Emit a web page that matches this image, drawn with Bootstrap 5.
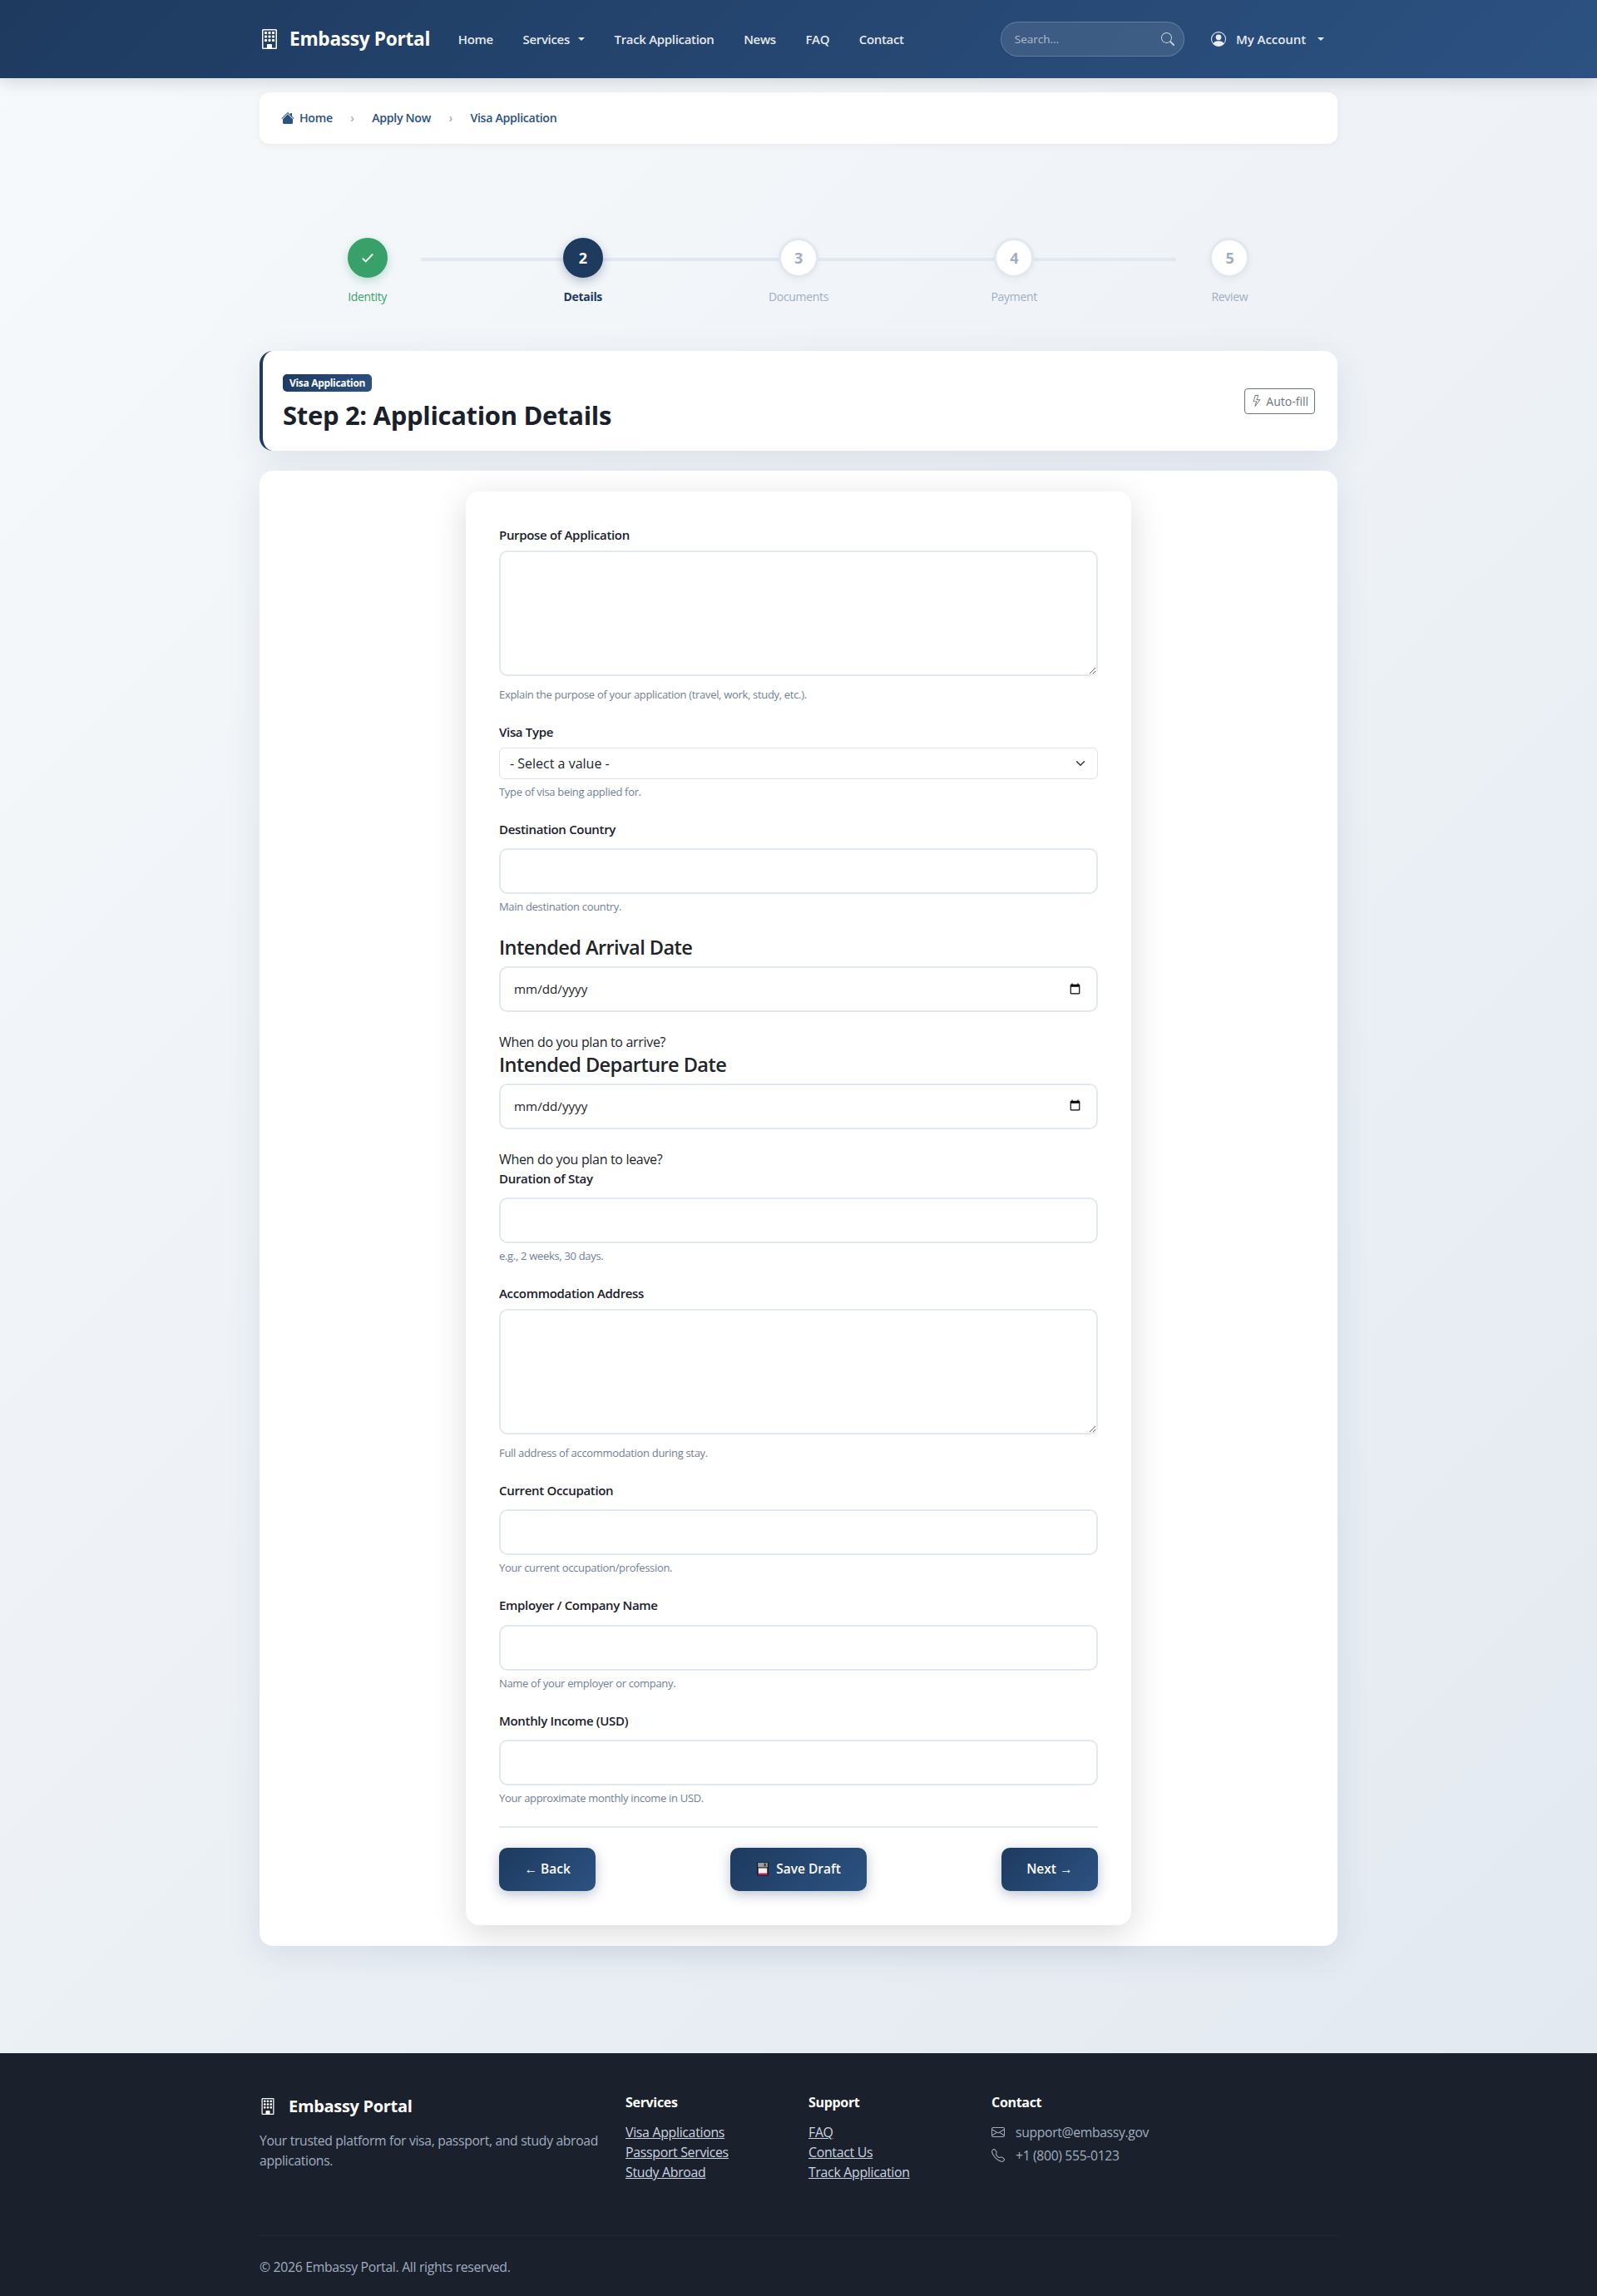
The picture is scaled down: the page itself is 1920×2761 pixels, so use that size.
<!DOCTYPE html>
<html lang="en">
<head>
  <meta charset="UTF-8">
  <meta name="viewport" content="width=device-width, initial-scale=1.0">
  <title>Embassy Portal - Visa Application</title>
  <link href="https://cdn.jsdelivr.net/npm/bootstrap@5.3.0/dist/css/bootstrap.min.css" rel="stylesheet">
  <style>
    body {
      font-family: "Open Sans", "Noto Sans", sans-serif;
      letter-spacing: -0.02em;
      background: linear-gradient(135deg, #f7fafc 0%, #e2e8f0 100%);
      color: #212529;
    }
    .ico { fill: currentColor; flex: none; }

    /* header */
    .top-bar { --bs-navbar-nav-link-padding-x: 17.8px; background: linear-gradient(135deg, #1e3a5f 0%, #2c5282 100%); height: 94px; padding: 0; box-shadow: 0 4px 20px rgba(0,0,0,.15); }
    .top-bar .navbar-brand { color: #fff; font-weight: 700; font-size: 22.7px; margin-right: 16px; padding: 0; display: flex; align-items: center; gap: 12px; }
    .top-bar .nav-link { color: rgba(255,255,255,.9); font-weight: 600; font-size: 15px; }
    .top-bar .nav-link.dropdown-toggle::after { margin-left: 10px; }
    .search-wrap { width: 221px; }
    .search-wrap input { height: 42px; border-radius: 21px; background: rgba(255,255,255,.1); border: 1px solid rgba(255,255,255,.2); font-size: 13.5px; padding: 0 40px 0 16px; color: #fff; }
    .search-wrap input::placeholder { color: rgba(255,255,255,.6); }
    .search-wrap .ico { position: absolute; right: 12px; top: 13px; color: rgba(255,255,255,.7); }
    .top-bar .account-link { margin-left: 14.5px; display: flex; align-items: center; gap: 12px; padding-right: 16px !important; letter-spacing: -0.005em; }
    .top-bar .account-link.dropdown-toggle::after { margin-left: 2px; }

    /* breadcrumb */
    .crumb-box { margin-top: 17px; height: 62px; background: #fff; border-radius: 12px; box-shadow: 0 2px 10px rgba(0,0,0,.05); padding: 0 26px; display: flex; align-items: center; }
    .crumb-box .breadcrumb { margin: 0; font-size: 14.2px; font-weight: 600; --bs-breadcrumb-divider: "›"; --bs-breadcrumb-item-padding-x: 21.5px; --bs-breadcrumb-divider-color: #a0aec0; }
    .crumb-box a { color: #2c5282; text-decoration: none; display: flex; align-items: center; gap: 6px; }
    .crumb-box .breadcrumb-item.active { color: #2c5282; }

    /* stepper */
    .step-track { margin-top: 113px; position: relative; display: flex; }
    .step-track::before { content: ""; position: absolute; top: 24px; left: 15%; right: 15%; height: 4px; background: #e2e8f0; }
    .step-item { flex: 1; text-align: center; position: relative; }
    .step-dot { width: 48px; height: 48px; border-radius: 50%; margin: 0 auto 12px; background: #fff; border: 3px solid #e2e8f0; color: #a0aec0; font-weight: 700; font-size: 18px; display: flex; align-items: center; justify-content: center; box-shadow: 0 2px 8px rgba(0,0,0,.05); }
    .step-name { font-size: 14px; line-height: 21px; font-weight: 500; color: #a0aec0; }
    .step-done .step-dot { background: #38a169; border-color: #38a169; color: #fff; box-shadow: 0 4px 12px rgba(56,161,105,.3); }
    .step-done .step-name { color: #38a169; }
    .step-now .step-dot { background: #1e3a5f; border-color: #1e3a5f; color: #fff; box-shadow: 0 4px 12px rgba(30,58,95,.3); }
    .step-now .step-name { color: #1e3a5f; font-weight: 700; }

    /* cards */
    .title-box { margin-top: 55px; height: 120px; background: #fff; border-left: 4px solid #1e3a5f; border-radius: 16px; box-shadow: 0 10px 40px rgba(30,58,95,.1); padding: 0 27px 0 24px; display: flex; align-items: center; justify-content: space-between; }
    .kind-tag { display: block; width: fit-content; height: 21px; line-height: 21px; padding: 0 8px; margin-bottom: 10px; border-radius: 5px; background: linear-gradient(135deg, #1e3a5f, #2c5282); color: #fff; font-size: 12px; font-weight: 700; }
    .title-box h1 { font-size: 31px; font-weight: 700; color: #1a202c; margin: 0; line-height: 37px; }
    .autofill-btn { font-size: 14px; font-weight: 400; padding: 0 7px; height: 31px; display: flex; align-items: center; gap: 4px; }
    .main-box { margin-top: 24px; margin-bottom: 129px; background: #fff; border: 0; border-radius: 16px; box-shadow: 0 10px 40px rgba(30,58,95,.1); padding: 25px 0; }
    .form-box { width: 800px; margin: 0 auto; background: #fff; border-radius: 16px; box-shadow: 0 10px 40px rgba(0,0,0,.15); padding: 42px 40px 41px; }

    /* form fields */
    .fld { margin-bottom: 24.5px; }
    .fld .form-label { font-size: 15px; font-weight: 600; color: #1a202c; margin-bottom: 8px; display: block; line-height: 21px; }
    .fld .form-control { border: 2px solid #e2e8f0; border-radius: 10px; height: 55px; margin-top: 12.5px; padding: 12px 16px; font-size: 16px; }
    .fld textarea.form-control { height: 151px; margin-top: 0; margin-bottom: 12.5px; display: block; }
    .fld .form-select { height: 38px; font-size: 16px; padding-left: 12px; }
    .fld .form-text { margin-top: 6px; font-size: 13px; line-height: 19.5px; color: #718096; }
    .fld textarea + .form-text { margin-top: 0; }
    .big-label.form-label { font-size: 23.6px !important; font-weight: 600 !important; line-height: 28.8px !important; color: #212529 !important; letter-spacing: -0.025em; }
    .fld .form-control.plain-date { margin-top: 0; height: 55px; font-size: 15.2px; }
    .big-hint { margin-top: 24px; line-height: 24px; font-size: 16px; }
    .fld-big { margin-bottom: 1px; }
    .btn-row { border-top: 2px solid #e2e8f0; margin-top: 23px; padding-top: 24px; display: flex; justify-content: space-between; }
    .act-btn { height: 52px; padding: 0 30.5px; border: 0; border-radius: 10px; background: linear-gradient(135deg, #1e3a5f, #2c5282); color: #fff; font-size: 15.5px; font-weight: 600; box-shadow: 0 4px 15px rgba(30,58,95,.3); display: flex; align-items: center; gap: 5px; }
    .act-btn.save-btn { gap: 8px; padding: 0 31.5px; }
    .act-btn:hover { color: #fff; background: #1e3a5f; }

    /* footer */
    .site-foot { background: #1a202c; height: 292px; padding-top: 47px; color: #a0aec0; }
    .foot-brand { color: #fff; font-weight: 700; font-size: 20px; display: flex; align-items: center; gap: 15px; margin-top: 2px; margin-bottom: 14px; }
    .foot-about { font-size: 15.7px; line-height: 24px; margin: 0; }
    .site-foot h6 { color: #fff; font-size: 16px; font-weight: 700; margin-bottom: 12.5px; line-height: 24px; }
    .site-foot ul { font-size: 15.9px; line-height: 24px; margin: 0; padding: 0; list-style: none; }
    .site-foot ul a { color: #cbd5e0; }
    .foot-contact { display: flex; align-items: center; gap: 13px; font-size: 15.7px; line-height: 24px; margin-bottom: 4px; }
    .foot-copy { margin-top: 64px; padding-top: 24.5px; border-top: 1px solid rgba(255,255,255,.04); font-size: 15.8px; line-height: 24px; }
  </style>
</head>
<body>

<svg width="0" height="0" class="position-absolute">
  <symbol id="i-building" viewBox="0 0 16 16">
    <path d="M4 2.5a.5.5 0 0 1 .5-.5h1a.5.5 0 0 1 .5.5v1a.5.5 0 0 1-.5.5h-1a.5.5 0 0 1-.5-.5v-1Zm3 0a.5.5 0 0 1 .5-.5h1a.5.5 0 0 1 .5.5v1a.5.5 0 0 1-.5.5h-1a.5.5 0 0 1-.5-.5v-1Zm3.5-.5a.5.5 0 0 0-.5.5v1a.5.5 0 0 0 .5.5h1a.5.5 0 0 0 .5-.5v-1a.5.5 0 0 0-.5-.5h-1ZM4 5.5a.5.5 0 0 1 .5-.5h1a.5.5 0 0 1 .5.5v1a.5.5 0 0 1-.5.5h-1a.5.5 0 0 1-.5-.5v-1ZM7.5 5a.5.5 0 0 0-.5.5v1a.5.5 0 0 0 .5.5h1a.5.5 0 0 0 .5-.5v-1a.5.5 0 0 0-.5-.5h-1Zm2.5.5a.5.5 0 0 1 .5-.5h1a.5.5 0 0 1 .5.5v1a.5.5 0 0 1-.5.5h-1a.5.5 0 0 1-.5-.5v-1ZM4.5 8a.5.5 0 0 0-.5.5v1a.5.5 0 0 0 .5.5h1a.5.5 0 0 0 .5-.5v-1a.5.5 0 0 0-.5-.5h-1Zm2.5.5a.5.5 0 0 1 .5-.5h1a.5.5 0 0 1 .5.5v1a.5.5 0 0 1-.5.5h-1a.5.5 0 0 1-.5-.5v-1Zm3.5-.5a.5.5 0 0 0-.5.5v1a.5.5 0 0 0 .5.5h1a.5.5 0 0 0 .5-.5v-1a.5.5 0 0 0-.5-.5h-1Z"/>
    <path d="M2 1a1 1 0 0 1 1-1h10a1 1 0 0 1 1 1v14a1 1 0 0 1-1 1H3a1 1 0 0 1-1-1V1Zm11 0H3v14h3v-2.5a.5.5 0 0 1 .5-.5h3a.5.5 0 0 1 .5.5V15h3V1Z"/>
  </symbol>
</svg>

<nav class="navbar navbar-expand-lg sticky-top top-bar">
  <div class="container">
    <a class="navbar-brand" href="#">
      <svg class="ico" width="24" height="24" viewBox="0 0 16 16"><use href="#i-building"/></svg>
      Embassy Portal
    </a>
    <ul class="navbar-nav me-auto">
      <li class="nav-item"><a class="nav-link" href="#">Home</a></li>
      <li class="nav-item dropdown"><a class="nav-link dropdown-toggle" href="#" role="button" data-bs-toggle="dropdown">Services</a></li>
      <li class="nav-item"><a class="nav-link" href="#">Track Application</a></li>
      <li class="nav-item"><a class="nav-link" href="#">News</a></li>
      <li class="nav-item"><a class="nav-link" href="#">FAQ</a></li>
      <li class="nav-item"><a class="nav-link" href="#">Contact</a></li>
    </ul>
    <form class="search-wrap position-relative">
      <input class="form-control" type="search" placeholder="Search...">
      <svg class="ico" width="16" height="16" viewBox="0 0 16 16"><path d="M11.742 10.344a6.5 6.5 0 1 0-1.397 1.398h-.001c.03.04.062.078.098.115l3.85 3.85a1 1 0 0 0 1.415-1.414l-3.85-3.85a1.007 1.007 0 0 0-.115-.1zM12 6.5a5.5 5.5 0 1 1-11 0 5.5 5.5 0 0 1 11 0z"/></svg>
    </form>
    <ul class="navbar-nav">
      <li class="nav-item dropdown">
        <a class="nav-link dropdown-toggle account-link" href="#" role="button" data-bs-toggle="dropdown">
          <svg class="ico" width="18" height="18" viewBox="0 0 16 16"><path d="M11 6a3 3 0 1 1-6 0 3 3 0 0 1 6 0z"/><path d="M0 8a8 8 0 1 1 16 0A8 8 0 0 1 0 8zm8-7a7 7 0 0 0-5.468 11.37C3.242 11.226 4.805 10 8 10s4.757 1.225 5.468 2.37A7 7 0 0 0 8 1z"/></svg>
          My Account
        </a>
      </li>
    </ul>
  </div>
</nav>

<div class="container">
  <div class="crumb-box">
    <ol class="breadcrumb">
      <li class="breadcrumb-item"><a href="#"><svg class="ico" width="16" height="16" viewBox="0 0 16 16"><path d="M8.707 1.5a1 1 0 0 0-1.414 0L.646 8.146a.5.5 0 0 0 .708.708L8 2.207l6.646 6.647a.5.5 0 0 0 .708-.708L13 5.793V2.5a.5.5 0 0 0-.5-.5h-1a.5.5 0 0 0-.5.5v1.293L8.707 1.5Z"/><path d="m8 3.293 6 6V13.5a1.5 1.5 0 0 1-1.5 1.5h-9A1.5 1.5 0 0 1 2 13.5V9.293l6-6Z"/></svg>Home</a></li>
      <li class="breadcrumb-item"><a href="#">Apply Now</a></li>
      <li class="breadcrumb-item active">Visa Application</li>
    </ol>
  </div>

  <div class="step-track">
    <div class="step-item step-done">
      <div class="step-dot"><svg width="18" height="18" viewBox="0 0 16 16" fill="none" stroke="currentColor" stroke-width="1.7"><path d="M2.5 8.5l3.5 3.5 7.5-8"/></svg></div>
      <div class="step-name">Identity</div>
    </div>
    <div class="step-item step-now">
      <div class="step-dot">2</div>
      <div class="step-name">Details</div>
    </div>
    <div class="step-item">
      <div class="step-dot">3</div>
      <div class="step-name">Documents</div>
    </div>
    <div class="step-item">
      <div class="step-dot">4</div>
      <div class="step-name">Payment</div>
    </div>
    <div class="step-item">
      <div class="step-dot">5</div>
      <div class="step-name">Review</div>
    </div>
  </div>

  <div class="title-box">
    <div class="pt-1">
      <span class="kind-tag">Visa Application</span>
      <h1>Step 2: Application Details</h1>
    </div>
    <button type="button" class="btn btn-sm btn-outline-secondary autofill-btn">
      <svg class="ico" width="14" height="16" viewBox="0 0 16 16"><path d="M5.52.359A.5.5 0 0 1 6 0h4a.5.5 0 0 1 .474.658L8.694 6H12.5a.5.5 0 0 1 .395.807l-7 9a.5.5 0 0 1-.873-.454L6.823 9.5H3.5a.5.5 0 0 1-.48-.641l2.5-8.5zM6.374 1 4.168 8.5H7.5a.5.5 0 0 1 .478.647L6.78 13.04 11.478 7H8a.5.5 0 0 1-.474-.658L9.306 1H6.374z"/></svg>
      Auto-fill
    </button>
  </div>

  <div class="card main-box">
    <div class="form-box">
      <form id="visaForm">
        <div class="fld">
          <label class="form-label" for="purpose">Purpose of Application</label>
          <textarea class="form-control" id="purpose"></textarea>
          <div class="form-text">Explain the purpose of your application (travel, work, study, etc.).</div>
        </div>
        <div class="fld">
          <label class="form-label" for="visaType">Visa Type</label>
          <select class="form-select" id="visaType"><option>- Select a value -</option></select>
          <div class="form-text">Type of visa being applied for.</div>
        </div>
        <div class="fld">
          <label class="form-label" for="country">Destination Country</label>
          <input type="text" class="form-control" id="country">
          <div class="form-text">Main destination country.</div>
        </div>
        <div class="fld fld-big">
          <label class="form-label big-label" for="arrival">Intended Arrival Date</label>
          <input type="date" class="form-control plain-date" id="arrival">
          <div class="big-hint">When do you plan to arrive?</div>
        </div>
        <div class="fld fld-big">
          <label class="form-label big-label" for="departure">Intended Departure Date</label>
          <input type="date" class="form-control plain-date" id="departure">
          <div class="big-hint">When do you plan to leave?</div>
        </div>
        <div class="fld">
          <label class="form-label" for="duration">Duration of Stay</label>
          <input type="text" class="form-control" id="duration">
          <div class="form-text">e.g., 2 weeks, 30 days.</div>
        </div>
        <div class="fld">
          <label class="form-label" for="address">Accommodation Address</label>
          <textarea class="form-control" id="address"></textarea>
          <div class="form-text">Full address of accommodation during stay.</div>
        </div>
        <div class="fld">
          <label class="form-label" for="occupation">Current Occupation</label>
          <input type="text" class="form-control" id="occupation">
          <div class="form-text">Your current occupation/profession.</div>
        </div>
        <div class="fld">
          <label class="form-label" for="employer">Employer / Company Name</label>
          <input type="text" class="form-control" id="employer">
          <div class="form-text">Name of your employer or company.</div>
        </div>
        <div class="fld mb-0">
          <label class="form-label" for="income">Monthly Income (USD)</label>
          <input type="text" class="form-control" id="income">
          <div class="form-text">Your approximate monthly income in USD.</div>
        </div>
        <div class="btn-row">
          <button type="button" class="btn act-btn">← Back</button>
          <button type="button" class="btn act-btn save-btn">
            <svg width="16" height="17" viewBox="0 0 14 16"><rect x=".5" y=".5" width="13" height="15" fill="#111"/><rect x="1.5" y="1" width="11" height="5" fill="#9aa0a6"/><rect x="8.5" y="1.5" width="2" height="3.5" fill="#333"/><rect x="2" y="7" width="10" height="6" fill="#eee"/><rect x="1.5" y="13" width="11" height="2" fill="#c2185b"/></svg>
            Save Draft
          </button>
          <button type="button" class="btn act-btn">Next →</button>
        </div>
      </form>
    </div>
  </div>
</div>

<footer class="site-foot">
  <div class="container">
    <div class="row">
      <div class="col-md-4">
        <div class="foot-brand">
          <svg class="ico" width="20" height="20" viewBox="0 0 16 16"><use href="#i-building"/></svg>
          Embassy Portal
        </div>
        <p class="foot-about">Your trusted platform for visa, passport, and study abroad applications.</p>
      </div>
      <div class="col-md-2">
        <h6>Services</h6>
        <ul>
          <li><a href="#">Visa Applications</a></li>
          <li><a href="#">Passport Services</a></li>
          <li><a href="#">Study Abroad</a></li>
        </ul>
      </div>
      <div class="col-md-2">
        <h6>Support</h6>
        <ul>
          <li><a href="#">FAQ</a></li>
          <li><a href="#">Contact Us</a></li>
          <li><a href="#">Track Application</a></li>
        </ul>
      </div>
      <div class="col-md-4">
        <h6>Contact</h6>
        <div class="foot-contact">
          <svg class="ico" width="16" height="16" viewBox="0 0 16 16"><path d="M0 4a2 2 0 0 1 2-2h12a2 2 0 0 1 2 2v8a2 2 0 0 1-2 2H2a2 2 0 0 1-2-2V4Zm2-1a1 1 0 0 0-1 1v.217l7 4.2 7-4.2V4a1 1 0 0 0-1-1H2Zm13 2.383-4.708 2.825L15 11.105V5.383Zm-.034 6.876-5.64-3.471L8 9.583l-1.326-.795-5.64 3.47A1 1 0 0 0 2 13h12a1 1 0 0 0 .966-.741ZM1 11.105l4.708-2.897L1 5.383v5.722Z"/></svg>
          support@embassy.gov
        </div>
        <div class="foot-contact">
          <svg class="ico" width="16" height="16" viewBox="0 0 16 16"><path d="M3.654 1.328a.678.678 0 0 0-1.015-.063L1.605 2.3c-.483.484-.661 1.169-.45 1.77a17.568 17.568 0 0 0 4.168 6.608 17.569 17.569 0 0 0 6.608 4.168c.601.211 1.286.033 1.77-.45l1.034-1.034a.678.678 0 0 0-.063-1.015l-2.307-1.794a.678.678 0 0 0-.58-.122l-2.19.547a1.745 1.745 0 0 1-1.657-.459L5.482 8.062a1.745 1.745 0 0 1-.46-1.657l.548-2.19a.678.678 0 0 0-.122-.58L3.654 1.328zM1.884.511a1.745 1.745 0 0 1 2.612.163L6.29 2.98c.329.423.445.974.315 1.494l-.547 2.19a.678.678 0 0 0 .178.643l2.457 2.457a.678.678 0 0 0 .644.178l2.189-.547a1.745 1.745 0 0 1 1.494.315l2.306 1.794c.829.645.905 1.87.163 2.611l-1.034 1.034c-.74.74-1.846 1.065-2.877.702a18.634 18.634 0 0 1-7.01-4.42 18.634 18.634 0 0 1-4.42-7.009c-.362-1.03-.037-2.137.703-2.877L1.885.511z"/></svg>
          +1 (800) 555-0123
        </div>
      </div>
    </div>
    <div class="foot-copy">© 2026 Embassy Portal. All rights reserved.</div>
  </div>
</footer>

<script src="https://cdn.jsdelivr.net/npm/bootstrap@5.3.0/dist/js/bootstrap.bundle.min.js"></script>
</body>
</html>
